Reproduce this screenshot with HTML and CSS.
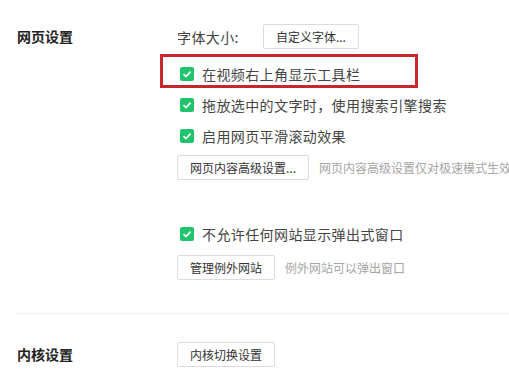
FILE: index.html
```html
<!DOCTYPE html>
<html>
<head>
    <meta charset="UTF-8">
    <title>设置</title>
    <link rel="stylesheet" href="styles.css">
</head>
<body>
    <div class="section">
        <div class="section-title">网页设置</div>
        <div class="section-body">
            <div class="row row-font">
                <span class="label">字体大小:</span>
                <button class="btn btn-font">自定义字体...</button>
            </div>

            <div class="row check-row first-check">
                <span class="checkbox"><svg width="14" height="14" viewBox="0 0 14 14"><path d="M3.5 7.2 L6 9.6 L10.6 4.6" fill="none" stroke="#fff" stroke-width="1.6"/></svg></span>
                <span class="label">在视频右上角显示工具栏</span>
                <div class="highlight"></div>
            </div>
            <div class="row check-row">
                <span class="checkbox"><svg width="14" height="14" viewBox="0 0 14 14"><path d="M3.5 7.2 L6 9.6 L10.6 4.6" fill="none" stroke="#fff" stroke-width="1.6"/></svg></span>
                <span class="label">拖放选中的文字时，使用搜索引擎搜索</span>
            </div>
            <div class="row check-row">
                <span class="checkbox"><svg width="14" height="14" viewBox="0 0 14 14"><path d="M3.5 7.2 L6 9.6 L10.6 4.6" fill="none" stroke="#fff" stroke-width="1.6"/></svg></span>
                <span class="label">启用网页平滑滚动效果</span>
            </div>

            <div class="row btn-row advanced-row">
                <button class="btn">网页内容高级设置...</button>
                <span class="note">网页内容高级设置仅对极速模式生效</span>
            </div>

            <div class="row check-row popup-row">
                <span class="checkbox"><svg width="14" height="14" viewBox="0 0 14 14"><path d="M3.5 7.2 L6 9.6 L10.6 4.6" fill="none" stroke="#fff" stroke-width="1.6"/></svg></span>
                <span class="label">不允许任何网站显示弹出式窗口</span>
            </div>
            <div class="row btn-row except-row">
                <button class="btn">管理例外网站</button>
                <span class="note">例外网站可以弹出窗口</span>
            </div>
        </div>
    </div>

    <div class="divider"></div>

    <div class="section section-kernel">
        <div class="section-title">内核设置</div>
        <div class="section-body">
            <div class="row btn-row">
                <button class="btn">内核切换设置</button>
            </div>
        </div>
    </div>
</body>
</html>
```

FILE: styles.css
```css
body {
    margin: 0;
    background-color: #fff;
    font-family: "Noto Sans CJK SC", "Noto Sans", sans-serif;
    font-size: 14px;
    color: #444;
    overflow: hidden;
}
.section {
    display: flex;
    padding-left: 17px;
}
.section:first-child {
    padding-top: 24px;
}
.section-title {
    width: 160px;
    flex-shrink: 0;
    font-size: 14px;
    font-weight: bold;
    line-height: 25px;
    color: #222;
}
.section-body {
    flex: 1;
    min-width: 0;
}
.row {
    display: flex;
    align-items: center;
    white-space: nowrap;
    position: relative;
}
.label {
    letter-spacing: 0.4px;
}
.row-font {
    height: 25px;
}
.row-font .label {
    margin-right: 24px;
}
.check-row {
    height: 31px;
}
.first-check {
    margin-top: 9px;
}
.checkbox {
    width: 14px;
    height: 14px;
    margin-left: 3px;
    margin-right: 8px;
    background-color: #1fc46b;
    border-radius: 2px;
    display: inline-flex;
}
.highlight {
    position: absolute;
    left: -17px;
    top: -4px;
    width: 252px;
    height: 28px;
    border: 3px solid #c9252d;
}
.btn-row {
    height: 25px;
}
.advanced-row {
    margin-top: 4px;
}
.popup-row {
    margin-top: 38px;
}
.except-row {
    margin-top: 6px;
}
.btn {
    height: 25px;
    padding: 0 12px;
    border: 1px solid #dcdcdc;
    border-radius: 2px;
    background-color: #fff;
    font-family: inherit;
    font-size: 12px;
    color: #333;
    cursor: pointer;
}
.btn-row .btn {
    margin-right: 10px;
}
.note {
    font-size: 12px;
    color: #a5a5a5;
}
.divider {
    margin: 33px 0 0 16px;
    height: 1px;
    background-color: #f0f0f0;
}
.section-kernel {
    margin-top: 28px;
}
```
